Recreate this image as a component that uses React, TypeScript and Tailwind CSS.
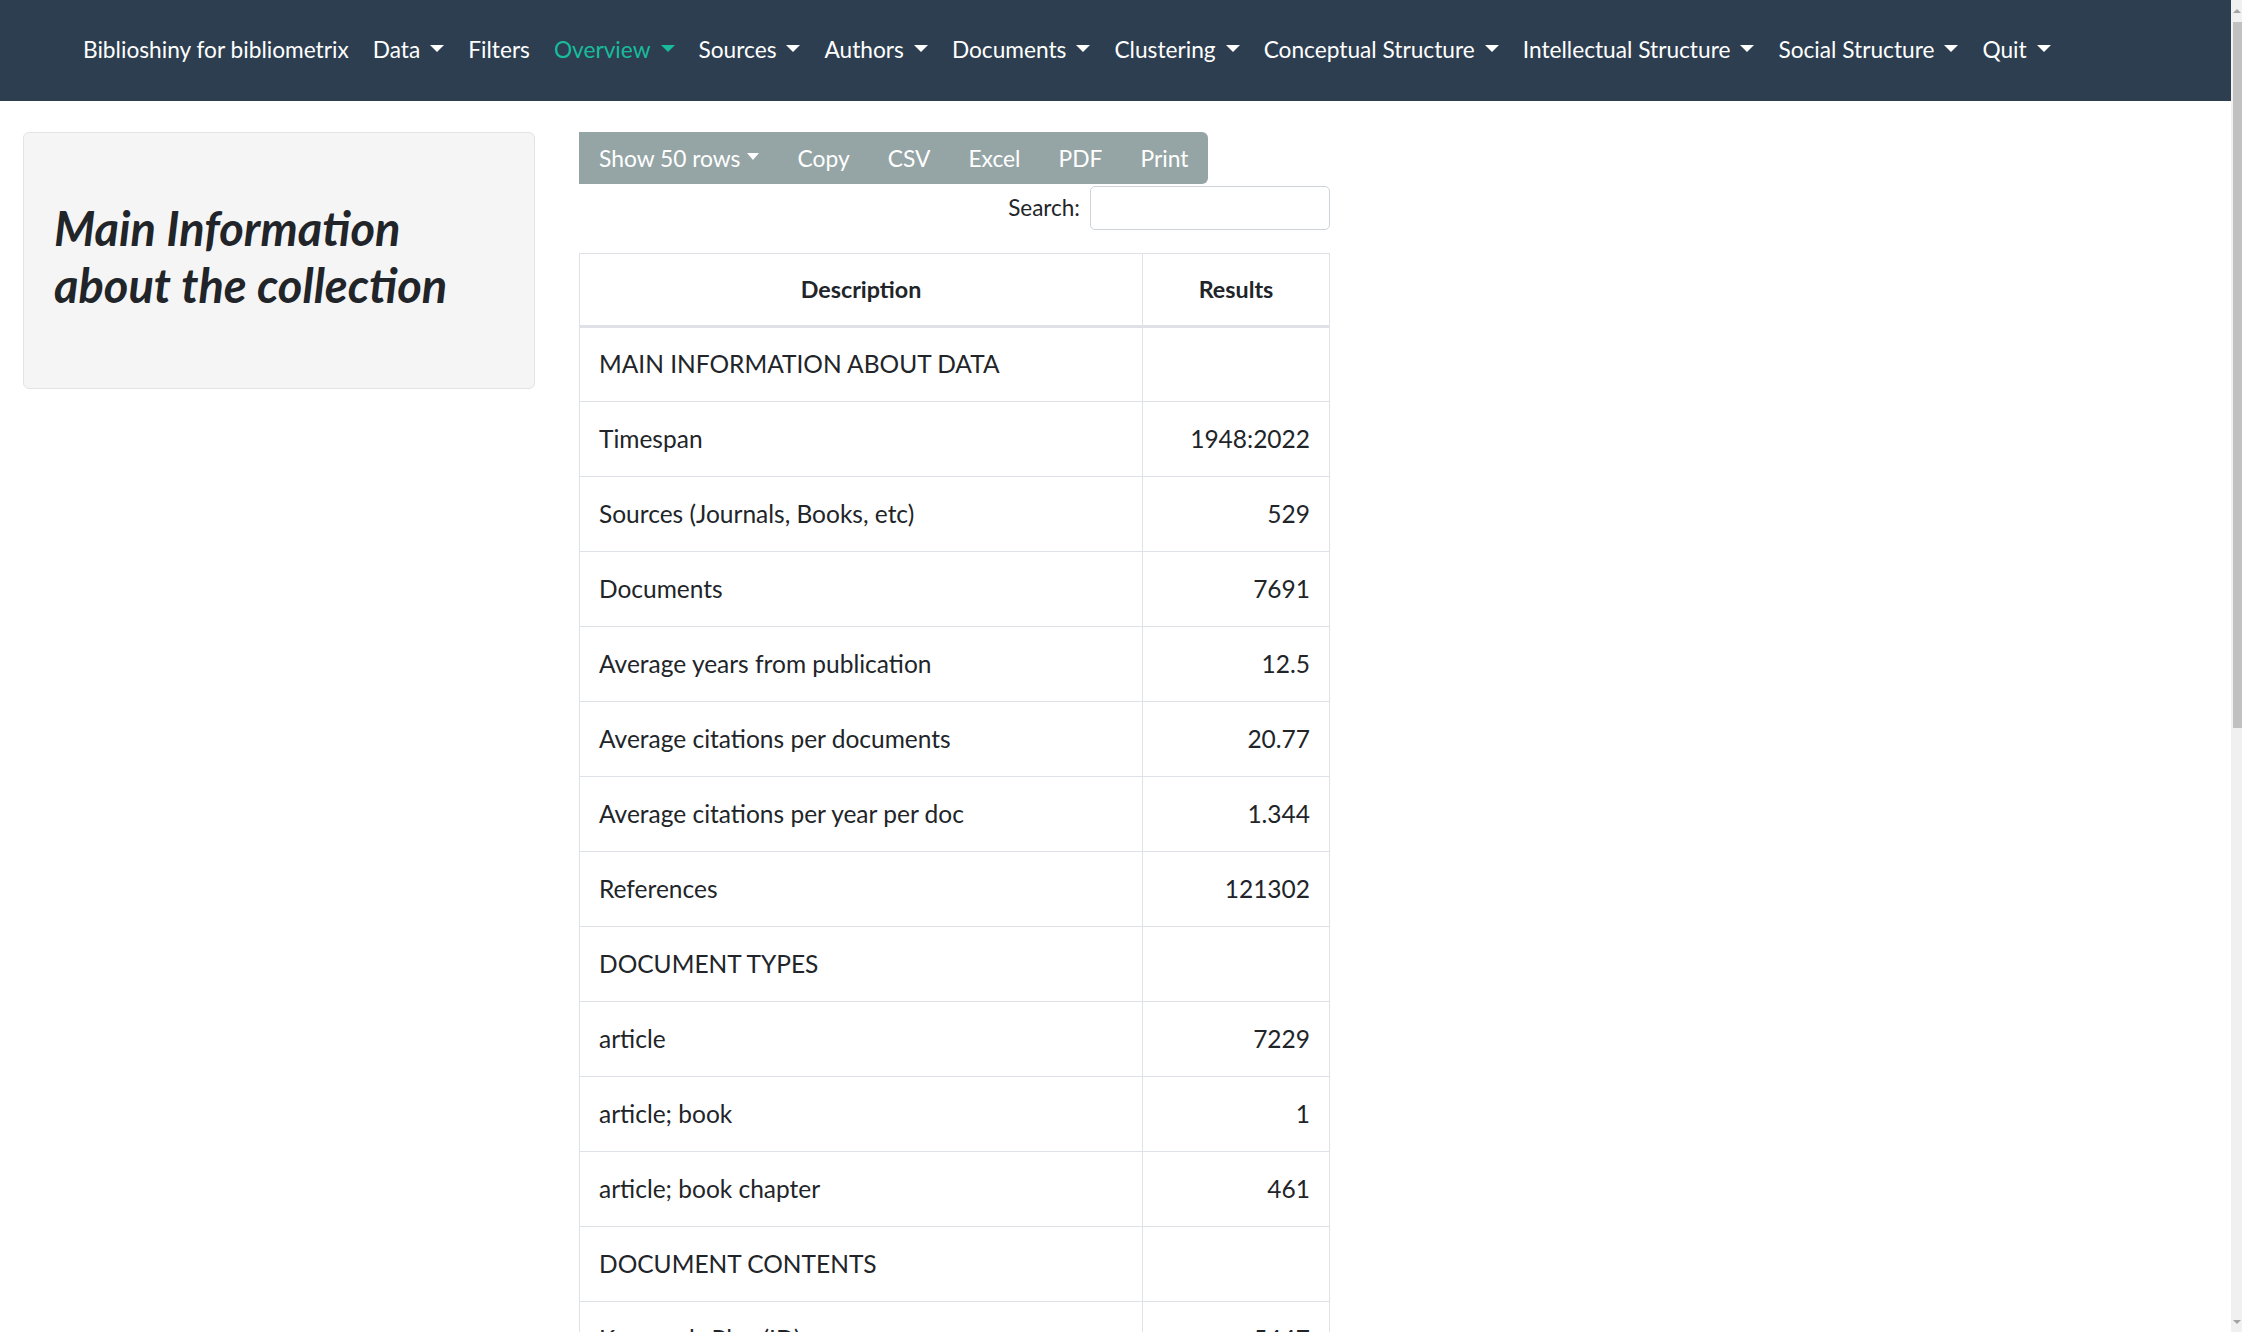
import React from 'react';

const navItems = [
  { label: 'Data', caret: true },
  { label: 'Filters', caret: false },
  { label: 'Overview', caret: true, active: true },
  { label: 'Sources', caret: true },
  { label: 'Authors', caret: true },
  { label: 'Documents', caret: true },
  { label: 'Clustering', caret: true },
  { label: 'Conceptual Structure', caret: true },
  { label: 'Intellectual Structure', caret: true },
  { label: 'Social Structure', caret: true },
  { label: 'Quit', caret: true },
];

const rows: [string, string][] = [
  ['MAIN INFORMATION ABOUT DATA', ''],
  ['Timespan', '1948:2022'],
  ['Sources (Journals, Books, etc)', '529'],
  ['Documents', '7691'],
  ['Average years from publication', '12.5'],
  ['Average citations per documents', '20.77'],
  ['Average citations per year per doc', '1.344'],
  ['References', '121302'],
  ['DOCUMENT TYPES', ''],
  ['article', '7229'],
  ['article; book', '1'],
  ['article; book chapter', '461'],
  ['DOCUMENT CONTENTS', ''],
  ['Keywords Plus (ID)', '5447'],
];

const Caret = () => (
  <span className="ml-[10px] inline-block h-0 w-0 translate-y-[-2px] border-x-[7px] border-t-[7.5px] border-x-transparent border-t-current align-middle" />
);

const App = () => {
  return (
    <div className="flex h-[1332px] w-full overflow-hidden bg-white font-['Lato','Open_Sans',sans-serif] text-[#212529]">
      <div className="min-w-0 flex-1">
        {/* navbar */}
        <nav className="flex h-[101px] items-center bg-[#2c3e50] pl-[83px] text-[22.7px] text-white">
          <span className="mr-[12px]">Biblioshiny for bibliometrix</span>
          {navItems.map((item) => (
            <span
              key={item.label}
              className={`flex items-center px-[12px] ${item.active ? 'text-[#18bc9c]' : 'text-white'}`}
            >
              {item.label}
              {item.caret && <Caret />}
            </span>
          ))}
        </nav>

        <div className="flex items-start pt-[31px]">
          {/* left well */}
          <div className="ml-[23px] h-[257px] w-[512px] rounded-[6px] border border-[#e3e3e3] bg-[#f5f5f5] px-[30px] pt-[67px]">
            <h3 className="text-[47px] font-bold italic leading-[57px] text-[#212529]">
              Main Information
              <br />
              about the collection
            </h3>
          </div>

          {/* table area */}
          <div className="ml-[44px] w-[751px]">
            <div className="flex h-[52px] w-fit items-center rounded-r-[6px] bg-[#95a5a6] text-[22.8px] text-white">
              <span className="flex items-center pl-[20px] pr-[19px]">
                Show 50 rows
                <span className="ml-[7px] inline-block h-0 w-0 translate-y-[-2px] border-x-[6.5px] border-t-[7px] border-x-transparent border-t-current" />
              </span>
              <span className="px-[19px]">Copy</span>
              <span className="px-[19px]">CSV</span>
              <span className="px-[19px]">Excel</span>
              <span className="px-[19px]">PDF</span>
              <span className="pl-[19px] pr-[20px]">Print</span>
            </div>

            <div className="mt-[2px] flex items-center justify-end gap-[10px]">
              <span className="text-[22.5px]">Search:</span>
              <div className="h-[44px] w-[240px] rounded-[5px] border border-[#ced4da] bg-white" />
            </div>

            <table className="mt-[23px] w-full border-collapse text-[24.5px]">
              <thead>
                <tr className="h-[73px] text-[23.3px]">
                  <th className="w-[563px] border border-b-[3px] border-[#dee2e6] font-bold">Description</th>
                  <th className="border border-b-[3px] border-[#dee2e6] font-bold">Results</th>
                </tr>
              </thead>
              <tbody>
                {rows.map(([desc, val]) => (
                  <tr key={desc} className="h-[75px]">
                    <td className="border border-[#dee2e6] px-[19px]">{desc}</td>
                    <td className="border border-[#dee2e6] px-[19px] text-right">{val}</td>
                  </tr>
                ))}
              </tbody>
            </table>
          </div>
        </div>
      </div>

      {/* scrollbar */}
      <div className="flex w-[11px] flex-col bg-[#f0f0f0]">
        <div className="flex h-[22px] items-center justify-center">
          <span className="h-0 w-0 border-x-[4px] border-b-[4px] border-x-transparent border-b-[#a3a3a3]" />
        </div>
        <div className="ml-[2px] h-[706px] bg-[#c1c1c1]" />
        <div className="flex-1" />
        <div className="flex h-[20px] items-center justify-center">
          <span className="h-0 w-0 border-x-[4px] border-t-[4px] border-x-transparent border-t-[#a3a3a3]" />
        </div>
      </div>
    </div>
  );
};

export default App;
